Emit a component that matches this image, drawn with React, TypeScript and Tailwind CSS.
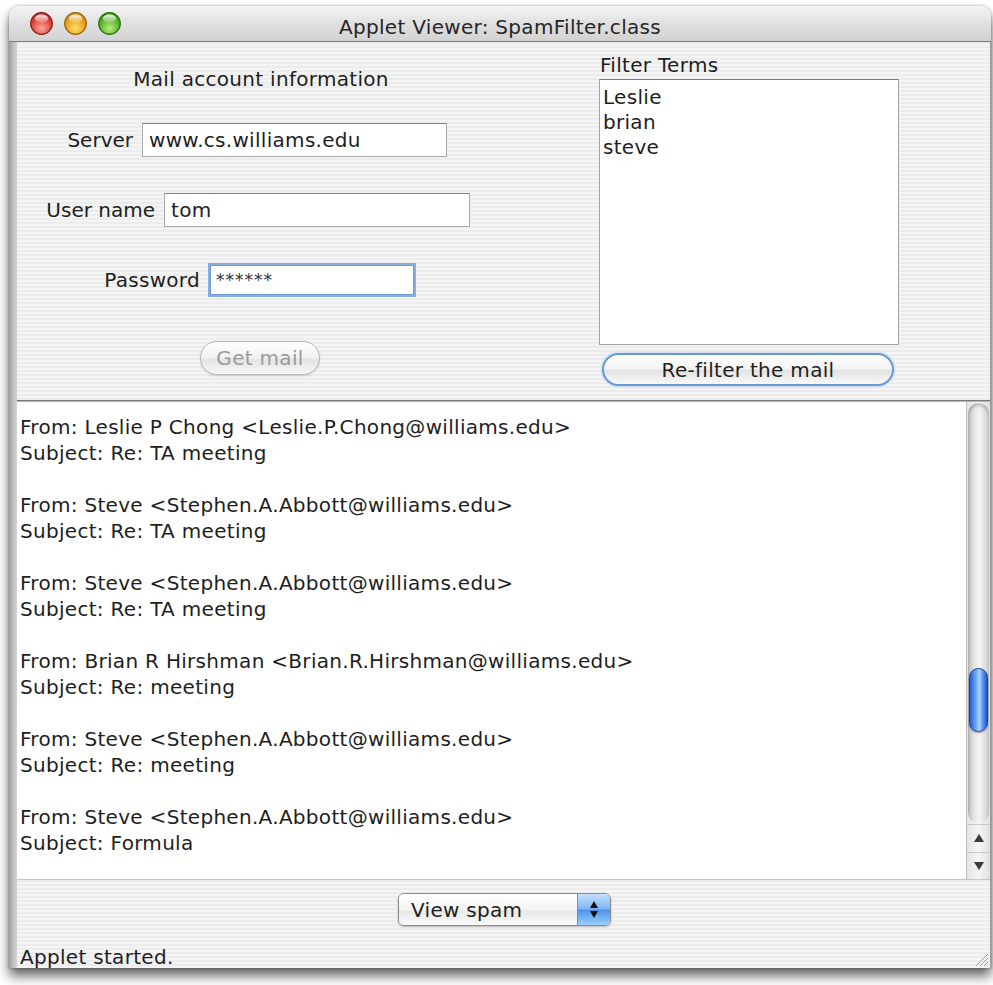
import React from "react";

const stripes =
  "bg-[repeating-linear-gradient(180deg,#ececec_0px,#ececec_2px,#f4f4f4_2px,#f4f4f4_4px)]";

function Light({ from, to, rim }: { from: string; to: string; rim: string }) {
  const id = from.replace("#", "g");
  return (
    <svg width="23" height="23" viewBox="0 0 23 23">
      <defs>
        <radialGradient id={id} cx="50%" cy="72%" r="62%">
          <stop offset="0%" stopColor={from} />
          <stop offset="100%" stopColor={to} />
        </radialGradient>
        <linearGradient id={id + "h"} x1="0" y1="0" x2="0" y2="1">
          <stop offset="0%" stopColor="#ffffff" stopOpacity="0.95" />
          <stop offset="100%" stopColor="#ffffff" stopOpacity="0.1" />
        </linearGradient>
      </defs>
      <circle cx="11.5" cy="11.5" r="10.8" fill={`url(#${id})`} stroke={rim} strokeWidth="1.2" />
      <ellipse cx="11.5" cy="6.6" rx="6.8" ry="4.2" fill={`url(#${id}h)`} />
    </svg>
  );
}

function TextField({ width, value, focused }: { width: string; value: string; focused?: boolean }) {
  return (
    <div
      className={
        focused
          ? `${width} h-[34px] bg-white border-2 border-[#86ade0] shadow-[inset_0_0_0_1px_#6f9bd6] flex items-start pl-[6px] pt-[3px] text-[17px] tracking-[1px] text-[#333]`
          : `${width} h-[34px] bg-white border border-[#a9a9a9] border-t-[#808080] flex items-center pl-[6px]`
      }
    >
      {value}
    </div>
  );
}

const mails = [
  ["From: Leslie P Chong <Leslie.P.Chong@williams.edu>", "Subject: Re: TA meeting"],
  ["From: Steve <Stephen.A.Abbott@williams.edu>", "Subject: Re: TA meeting"],
  ["From: Steve <Stephen.A.Abbott@williams.edu>", "Subject: Re: TA meeting"],
  ["From: Brian R Hirshman <Brian.R.Hirshman@williams.edu>", "Subject: Re: meeting"],
  ["From: Steve <Stephen.A.Abbott@williams.edu>", "Subject: Re: meeting"],
  ["From: Steve <Stephen.A.Abbott@williams.edu>", "Subject: Formula"],
];

export default function App() {
  return (
    <div className="min-h-[985px] w-[993px] bg-white font-['DejaVu_Sans',sans-serif] text-[#1e1e1e] text-[20px] tracking-[0.3px]">
      <div className="pl-[9px] pt-[6px]">
        <div className="w-[982px] rounded-t-[10px] shadow-[0_8px_12px_rgba(0,0,0,0.6),0_0_3px_rgba(0,0,0,0.35)]">
          {/* title bar */}
          <div className="h-[36px] rounded-t-[10px] border-b border-[#7c7c7c] bg-[linear-gradient(180deg,#f4f4f4,#e2e2e2_45%,#d2d2d2)] grid grid-cols-[1fr_auto_1fr] items-center">
            <div className="flex items-center gap-[11px] pl-[21px]">
              <Light from="#ffa49a" to="#cc2a20" rim="#8e1a12" />
              <Light from="#ffe06a" to="#dc8a08" rim="#9a6206" />
              <Light from="#b8f07a" to="#3b9a14" rim="#2a6e0e" />
            </div>
            <div className="text-[#262626] pt-[6px] leading-[26px]">Applet Viewer: SpamFilter.class</div>
            <div />
          </div>

          <div className="flex">
            {/* left frame edge */}
            <div className="w-[8px] bg-[linear-gradient(90deg,#9e9e9e,#bdbdbd_50%,#d4d4d4)]" />

            <div className="w-[973px] flex flex-col">
              {/* account + filter panel */}
              <div className={`h-[358px] flex ${stripes}`}>
                <div className="w-[582px] flex flex-col">
                  <div className="mt-[24px] w-[488px] h-[26px] leading-[26px] text-center">Mail account information</div>

                  <div className="mt-[31px] flex items-center">
                    <div className="w-[125px] pr-[9px] text-right tracking-[0px]">Server</div>
                    <TextField width="w-[305px]" value="www.cs.williams.edu" />
                  </div>
                  <div className="mt-[36px] flex items-center">
                    <div className="w-[147px] pr-[9px] text-right tracking-[0px]">User name</div>
                    <TextField width="w-[306px]" value="tom" />
                  </div>
                  <div className="mt-[36px] flex items-center">
                    <div className="w-[191px] pr-[8px] text-right">Password</div>
                    <TextField width="w-[208px]" value="******" focused />
                  </div>

                  <div className="mt-[44px] ml-[183px] w-[120px] h-[34px] rounded-full border border-[#b4b4b4] bg-[linear-gradient(180deg,#ffffff,#f1f1f1_50%,#e4e4e4_55%,#f6f6f6)] shadow-[0_1px_2px_rgba(0,0,0,0.15)] flex items-center justify-center text-[#9a9a9a]">
                    Get mail
                  </div>
                </div>

                <div className="w-[300px] flex flex-col">
                  <div className="mt-[10px] h-[26px] leading-[26px] pl-[1px]">Filter Terms</div>
                  <div className="mt-[1px] h-[266px] bg-white border border-[#a4a4a4] border-t-[#7e7e7e] pl-[3px] pt-[5px] leading-[25px]">
                    <div>Leslie</div>
                    <div>brian</div>
                    <div>steve</div>
                  </div>
                  <div className="mt-[8px] ml-[3px] w-[292px] h-[33px] rounded-full border-2 border-[#6a9ad4] shadow-[0_0_3px_#9cc2ee] bg-[linear-gradient(180deg,#ffffff,#f3f3f3_48%,#e2e2e2_52%,#f8f8f8)] flex items-center justify-center">
                    Re-filter the mail
                  </div>
                </div>
              </div>

              {/* split divider */}
              <div className="h-[2px] border-t border-[#7a7a7a] bg-[#b4b4b4]" />

              {/* message list */}
              <div className="h-[478px] flex border-b border-[#c6c6c6]">
                <div className="flex-1 bg-white pl-[3px] pt-[12px] leading-[26px] overflow-hidden">
                  {mails.map(([from, subject], i) => (
                    <div key={i} className="mb-[26px]">
                      <div>{from}</div>
                      <div>{subject}</div>
                    </div>
                  ))}
                </div>

                {/* vertical scrollbar */}
                <div className="w-[24px] flex flex-col border-l border-[#bdbdbd] bg-[linear-gradient(90deg,#e4e4e4,#f6f6f6_50%,#e0e0e0)]">
                  <div className="mx-[1px] mt-[1px] h-[420px] rounded-full bg-[linear-gradient(90deg,#bdbdbd,#e6e6e6_30%,#f4f4f4_55%,#cfcfcf)] shadow-[inset_0_3px_3px_rgba(0,0,0,0.2)] flex flex-col">
                    <div className="mt-[265px] mx-[1px] h-[64px] rounded-full border border-[#17409e] bg-[linear-gradient(90deg,#2a5fd0,#5d9cf4_30%,#a9d6ff_55%,#4a8ae8_80%,#2456c4)] shadow-[0_1px_2px_rgba(0,0,0,0.4)]" />
                  </div>
                  <div className="flex-1 flex flex-col border-t border-[#c8c8c8] mt-[1px]">
                    <div className="flex-1 flex items-center justify-center border-b border-[#c8c8c8]">
                      <svg width="10" height="8" viewBox="0 0 10 8">
                        <path d="M5 0 L10 8 L0 8 Z" fill="#3a3a3a" />
                      </svg>
                    </div>
                    <div className="flex-1 flex items-center justify-center">
                      <svg width="10" height="8" viewBox="0 0 10 8">
                        <path d="M0 0 L10 0 L5 8 Z" fill="#3a3a3a" />
                      </svg>
                    </div>
                  </div>
                </div>
              </div>

              {/* bottom controls + status */}
              <div className={`h-[88px] flex flex-col ${stripes}`}>
                <div className="mt-[13px] self-center ml-[2px] w-[213px] h-[33px] rounded-[6px] border border-[#8a8a8a] shadow-[0_1px_2px_rgba(0,0,0,0.25)] flex overflow-hidden">
                  <div className="flex-1 bg-[linear-gradient(180deg,#ffffff,#f4f4f4_50%,#e8e8e8_55%,#fafafa)] flex items-center pl-[12px]">
                    View spam
                  </div>
                  <div className="w-[33px] border-l border-[#6b8fc8] bg-[linear-gradient(180deg,#c4e0ff,#7fb6f4_48%,#4d93ea_52%,#9bd0ff)] flex flex-col items-center justify-center gap-[3px]">
                    <svg width="8" height="7" viewBox="0 0 8 7">
                      <path d="M4 0 L8 7 L0 7 Z" fill="#111" />
                    </svg>
                    <svg width="8" height="7" viewBox="0 0 8 7">
                      <path d="M0 0 L8 0 L4 7 Z" fill="#111" />
                    </svg>
                  </div>
                </div>
                <div className="mt-auto h-[22px] flex items-end justify-between">
                  <div className="pl-[3px] leading-[22px]">Applet started.</div>
                  <svg width="16" height="16" viewBox="0 0 16 16" className="mb-[1px] mr-[1px]">
                    <path d="M15 3 L3 15 M15 7 L7 15 M15 11 L11 15" stroke="#9a9a9a" strokeWidth="1" />
                    <path d="M15 4 L4 15 M15 8 L8 15 M15 12 L12 15" stroke="#ffffff" strokeWidth="1" />
                  </svg>
                </div>
              </div>
            </div>

            <div className="w-[1px] bg-[#9a9a9a]" />
          </div>
        </div>
      </div>
    </div>
  );
}
